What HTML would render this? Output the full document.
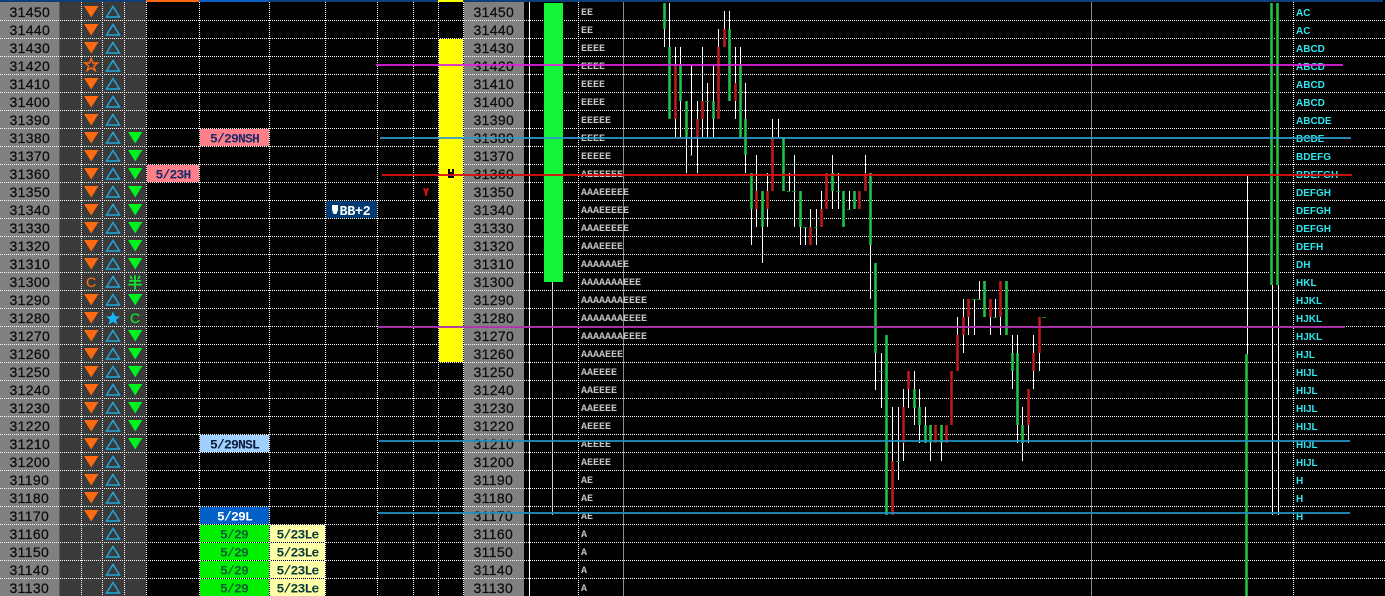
<!DOCTYPE html>
<html><head><meta charset="utf-8"><title>Chart</title>
<style>
html,body{margin:0;padding:0;background:#000;width:1385px;height:596px;overflow:hidden}
svg{display:block}
.p{font:14px "Liberation Sans",sans-serif;fill:#0c0c0c;stroke:#0c0c0c;stroke-width:.25px;letter-spacing:.35px}
.t{font:bold 10px "Liberation Mono",monospace;fill:#c4c4c4}
.c{font:bold 10px "Liberation Sans",sans-serif;fill:#2fe6ee}
.l{font:bold 13px "Liberation Mono",monospace;text-anchor:middle;letter-spacing:-.8px}
</style></head><body>
<svg width="1385" height="596" viewBox="0 0 1385 596" xmlns="http://www.w3.org/2000/svg">
<defs>
<polygon id="o" points="84,6 98.5,6 91.2,17.5" fill="#ff6a10"/>
<polygon id="b" points="113,6.5 119.5,17 106.5,17" fill="none" stroke="#20a8dc" stroke-width="1.5"/>
<polygon id="g" points="128,6 142.3,6 135.2,17.5" fill="#00f020"/>
</defs>
<rect width="1385" height="596" fill="#000"/>
<rect x="0" y="2" width="59" height="594" fill="#808080"/>
<rect x="59" y="2" width="1" height="594" fill="#5a5a5a"/>
<rect x="60" y="2" width="86" height="594" fill="#3a3a3a"/>
<rect x="464" y="2" width="60" height="594" fill="#808080"/>
<rect x="0" y="0" width="1383" height="2" fill="#0f3f75"/>
<rect x="146" y="0" width="53" height="2" fill="#ff6a10"/>
<rect x="199" y="0" width="70" height="2" fill="#0a60c0"/>
<rect x="438" y="0" width="25" height="2" fill="#ffff00"/>
<path d="M529.5 2V596" stroke="#fff" stroke-width="1"/>
<path d="M623.5 2V596M1091.5 2V596" stroke="#8a8a8a" stroke-width="1"/>
<path d="M0 20.5H1385M0 38.5H1385M0 56.5H1385M0 74.5H1385M0 92.5H1385M0 110.5H1385M0 128.5H1385M0 146.5H1385M0 164.5H1385M0 182.5H1385M0 200.5H1385M0 218.5H1385M0 236.5H1385M0 254.5H1385M0 272.5H1385M0 290.5H1385M0 308.5H1385M0 326.5H1385M0 344.5H1385M0 362.5H1385M0 380.5H1385M0 398.5H1385M0 416.5H1385M0 434.5H1385M0 452.5H1385M0 470.5H1385M0 488.5H1385M0 506.5H1385M0 524.5H1385M0 542.5H1385M0 560.5H1385M0 578.5H1385" stroke="#fff" stroke-width="1" stroke-dasharray="1 1" fill="none"/>
<path d="M81.5 2V596M102.5 2V596M124.5 2V596M146.5 2V596M199.5 2V596M269.5 2V596M325.5 2V596M377.5 2V596M413.5 2V596M438.5 2V596M463.5 2V596M578.5 2V596M1293.5 2V596" stroke="#fff" stroke-width="1" stroke-dasharray="1 1" fill="none"/>
<rect x="439" y="39" width="24" height="323" fill="#ffff00"/>
<rect x="544" y="3" width="19" height="279" fill="#14f53a"/>
<path d="M552.5 282V515" stroke="#d0d0d0" stroke-width="1"/>
<g>
<text class="p" x="9.5" y="17">31450</text><text class="p" x="9.5" y="35">31440</text><text class="p" x="9.5" y="53">31430</text><text class="p" x="9.5" y="71">31420</text><text class="p" x="9.5" y="89">31410</text><text class="p" x="9.5" y="107">31400</text><text class="p" x="9.5" y="125">31390</text><text class="p" x="9.5" y="143">31380</text><text class="p" x="9.5" y="161">31370</text><text class="p" x="9.5" y="179">31360</text><text class="p" x="9.5" y="197">31350</text><text class="p" x="9.5" y="215">31340</text><text class="p" x="9.5" y="233">31330</text><text class="p" x="9.5" y="251">31320</text><text class="p" x="9.5" y="269">31310</text><text class="p" x="9.5" y="287">31300</text><text class="p" x="9.5" y="305">31290</text><text class="p" x="9.5" y="323">31280</text><text class="p" x="9.5" y="341">31270</text><text class="p" x="9.5" y="359">31260</text><text class="p" x="9.5" y="377">31250</text><text class="p" x="9.5" y="395">31240</text><text class="p" x="9.5" y="413">31230</text><text class="p" x="9.5" y="431">31220</text><text class="p" x="9.5" y="449">31210</text><text class="p" x="9.5" y="467">31200</text><text class="p" x="9.5" y="485">31190</text><text class="p" x="9.5" y="503">31180</text><text class="p" x="9.5" y="521">31170</text><text class="p" x="9.5" y="539">31160</text><text class="p" x="9.5" y="557">31150</text><text class="p" x="9.5" y="575">31140</text><text class="p" x="9.5" y="593">31130</text>
<text class="p" x="473.5" y="17">31450</text><text class="p" x="473.5" y="35">31440</text><text class="p" x="473.5" y="53">31430</text><text class="p" x="473.5" y="71">31420</text><text class="p" x="473.5" y="89">31410</text><text class="p" x="473.5" y="107">31400</text><text class="p" x="473.5" y="125">31390</text><text class="p" x="473.5" y="143">31380</text><text class="p" x="473.5" y="161">31370</text><text class="p" x="473.5" y="179">31360</text><text class="p" x="473.5" y="197">31350</text><text class="p" x="473.5" y="215">31340</text><text class="p" x="473.5" y="233">31330</text><text class="p" x="473.5" y="251">31320</text><text class="p" x="473.5" y="269">31310</text><text class="p" x="473.5" y="287">31300</text><text class="p" x="473.5" y="305">31290</text><text class="p" x="473.5" y="323">31280</text><text class="p" x="473.5" y="341">31270</text><text class="p" x="473.5" y="359">31260</text><text class="p" x="473.5" y="377">31250</text><text class="p" x="473.5" y="395">31240</text><text class="p" x="473.5" y="413">31230</text><text class="p" x="473.5" y="431">31220</text><text class="p" x="473.5" y="449">31210</text><text class="p" x="473.5" y="467">31200</text><text class="p" x="473.5" y="485">31190</text><text class="p" x="473.5" y="503">31180</text><text class="p" x="473.5" y="521">31170</text><text class="p" x="473.5" y="539">31160</text><text class="p" x="473.5" y="557">31150</text><text class="p" x="473.5" y="575">31140</text><text class="p" x="473.5" y="593">31130</text>
</g>
<g>
<use href="#o" y="0"/><use href="#o" y="18"/><use href="#o" y="36"/><use href="#o" y="72"/><use href="#o" y="90"/><use href="#o" y="108"/><use href="#o" y="126"/><use href="#o" y="144"/><use href="#o" y="162"/><use href="#o" y="180"/><use href="#o" y="198"/><use href="#o" y="216"/><use href="#o" y="234"/><use href="#o" y="252"/><use href="#o" y="288"/><use href="#o" y="306"/><use href="#o" y="324"/><use href="#o" y="342"/><use href="#o" y="360"/><use href="#o" y="378"/><use href="#o" y="396"/><use href="#o" y="414"/><use href="#o" y="432"/><use href="#o" y="450"/><use href="#o" y="468"/><use href="#o" y="486"/><use href="#o" y="504"/>
<use href="#b" y="0"/><use href="#b" y="18"/><use href="#b" y="36"/><use href="#b" y="54"/><use href="#b" y="72"/><use href="#b" y="90"/><use href="#b" y="108"/><use href="#b" y="126"/><use href="#b" y="144"/><use href="#b" y="162"/><use href="#b" y="180"/><use href="#b" y="198"/><use href="#b" y="216"/><use href="#b" y="234"/><use href="#b" y="252"/><use href="#b" y="270"/><use href="#b" y="288"/><use href="#b" y="324"/><use href="#b" y="342"/><use href="#b" y="360"/><use href="#b" y="378"/><use href="#b" y="396"/><use href="#b" y="414"/><use href="#b" y="432"/><use href="#b" y="450"/><use href="#b" y="468"/><use href="#b" y="486"/><use href="#b" y="504"/><use href="#b" y="522"/><use href="#b" y="540"/><use href="#b" y="558"/><use href="#b" y="576"/>
<use href="#g" y="126"/><use href="#g" y="144"/><use href="#g" y="162"/><use href="#g" y="180"/><use href="#g" y="198"/><use href="#g" y="216"/><use href="#g" y="234"/><use href="#g" y="252"/><use href="#g" y="288"/><use href="#g" y="324"/><use href="#g" y="342"/><use href="#g" y="360"/><use href="#g" y="378"/><use href="#g" y="396"/><use href="#g" y="414"/><use href="#g" y="432"/>
<polygon points="91.2,58.5 92.9,63 97.6,63 93.8,66 95.2,70.6 91.2,67.8 87.2,70.6 88.6,66 84.8,63 89.5,63" fill="none" stroke="#ff6a10" stroke-width="1.4"/>
<polygon points="113,311.5 115,316.3 120.2,316.5 116.1,319.7 117.6,324.8 113,321.9 108.4,324.8 109.9,319.7 105.8,316.5 111,316.3" fill="#18b4f0"/>
<text x="91" y="287" text-anchor="middle" style="font:14px 'Liberation Sans',sans-serif;fill:#f06a18;stroke:#f06a18;stroke-width:.3px">C</text>
<text x="135" y="323" text-anchor="middle" style="font:14px 'Liberation Sans',sans-serif;fill:#10e030;stroke:#10e030;stroke-width:.3px">C</text>
<text x="135" y="288" text-anchor="middle" style="font:bold 15px 'Liberation Sans','Noto Sans CJK JP',sans-serif;fill:#10e030">半</text>
</g>
<g>
<rect x="200" y="129" width="69" height="17" fill="#ff8088"/><text class="l" x="234.5" y="142.5" fill="#1a2a6a">5/29NSH</text>
<rect x="147" y="165" width="52" height="17" fill="#ff8088"/><text class="l" x="173" y="178.5" fill="#1a2a6a">5/23H</text>
<rect x="200" y="435" width="69" height="17" fill="#a0d0ff"/><text class="l" x="234.5" y="448.5" fill="#0a1a3a">5/29NSL</text>
<rect x="200" y="507" width="69" height="17" fill="#0060c8"/><text class="l" x="234.5" y="520.5" fill="#fff">5/29L</text>
<rect x="200" y="525" width="69" height="17" fill="#00f000"/><text class="l" x="234" y="538.5" fill="#0b5e38">5/29</text>
<rect x="200" y="543" width="69" height="17" fill="#00f000"/><text class="l" x="234" y="556.5" fill="#0b5e38">5/29</text>
<rect x="200" y="561" width="69" height="17" fill="#00f000"/><text class="l" x="234" y="574.5" fill="#0b5e38">5/29</text>
<rect x="200" y="579" width="69" height="17" fill="#00f000"/><text class="l" x="234" y="592.5" fill="#0b5e38">5/29</text>
<rect x="270" y="525" width="55" height="17" fill="#ffffa8"/><text class="l" x="297.5" y="538.5" fill="#0a3a3a">5/23Le</text>
<rect x="270" y="543" width="55" height="17" fill="#ffffa8"/><text class="l" x="297.5" y="556.5" fill="#0a3a3a">5/23Le</text>
<rect x="270" y="561" width="55" height="17" fill="#ffffa8"/><text class="l" x="297.5" y="574.5" fill="#0a3a3a">5/23Le</text>
<rect x="270" y="579" width="55" height="17" fill="#ffffa8"/><text class="l" x="297.5" y="592.5" fill="#0a3a3a">5/23Le</text>
<rect x="326" y="201" width="51" height="17" fill="#003a70"/>
<polygon points="332,205 338,205 338,210 336.5,214 333.5,214 332,210" fill="#fff"/>
<text x="339.5" y="215" style="font:bold 13.5px 'Liberation Mono',monospace;fill:#fff;letter-spacing:-.4px">BB+2</text>
<polygon points="423,188 425,188 426,190 427,188 429,188 427.5,192 427,196 425,196 424.5,192" fill="#d01010"/>
<path d="M448 178V169H450V172H452V169H454V178Z" fill="#000"/>
</g>
<g>
<text class="t" x="581" y="15">EE</text><text class="t" x="581" y="33">EE</text><text class="t" x="581" y="51">EEEE</text><text class="t" x="581" y="69">EEEE</text><text class="t" x="581" y="87">EEEE</text><text class="t" x="581" y="105">EEEE</text><text class="t" x="581" y="123">EEEEE</text><text class="t" x="581" y="141">EEEE</text><text class="t" x="581" y="159">EEEEE</text><text class="t" x="581" y="177">AEEEEEE</text><text class="t" x="581" y="195">AAAEEEEE</text><text class="t" x="581" y="213">AAAEEEEE</text><text class="t" x="581" y="231">AAAEEEEE</text><text class="t" x="581" y="249">AAAEEEE</text><text class="t" x="581" y="267">AAAAAAEE</text><text class="t" x="581" y="285">AAAAAAAEEE</text><text class="t" x="581" y="303">AAAAAAAEEEE</text><text class="t" x="581" y="321">AAAAAAAEEEE</text><text class="t" x="581" y="339">AAAAAAAEEEE</text><text class="t" x="581" y="357">AAAAEEE</text><text class="t" x="581" y="375">AAEEEE</text><text class="t" x="581" y="393">AAEEEE</text><text class="t" x="581" y="411">AAEEEE</text><text class="t" x="581" y="429">AEEEE</text><text class="t" x="581" y="447">AEEEE</text><text class="t" x="581" y="465">AEEEE</text><text class="t" x="581" y="483">AE</text><text class="t" x="581" y="501">AE</text><text class="t" x="581" y="519">AE</text><text class="t" x="581" y="537">A</text><text class="t" x="581" y="555">A</text><text class="t" x="581" y="573">A</text><text class="t" x="581" y="591">A</text>
<text class="c" x="1296" y="16">AC</text><text class="c" x="1296" y="34">AC</text><text class="c" x="1296" y="52">ABCD</text><text class="c" x="1296" y="70">ABCD</text><text class="c" x="1296" y="88">ABCD</text><text class="c" x="1296" y="106">ABCD</text><text class="c" x="1296" y="124">ABCDE</text><text class="c" x="1296" y="142">BCDE</text><text class="c" x="1296" y="160">BDEFG</text><text class="c" x="1296" y="178">BDEFGH</text><text class="c" x="1296" y="196">DEFGH</text><text class="c" x="1296" y="214">DEFGH</text><text class="c" x="1296" y="232">DEFGH</text><text class="c" x="1296" y="250">DEFH</text><text class="c" x="1296" y="268">DH</text><text class="c" x="1296" y="286">HKL</text><text class="c" x="1296" y="304">HJKL</text><text class="c" x="1296" y="322">HJKL</text><text class="c" x="1296" y="340">HJKL</text><text class="c" x="1296" y="358">HJL</text><text class="c" x="1296" y="376">HIJL</text><text class="c" x="1296" y="394">HIJL</text><text class="c" x="1296" y="412">HIJL</text><text class="c" x="1296" y="430">HIJL</text><text class="c" x="1296" y="448">HIJL</text><text class="c" x="1296" y="466">HIJL</text><text class="c" x="1296" y="484">H</text><text class="c" x="1296" y="502">H</text><text class="c" x="1296" y="520">H</text>
</g>
<path fill="none" stroke="#fff" stroke-width="1" d="M664.5 3V47M669.5 3V47M675.5 47V137M680.5 47V137M686.5 101V173M691.5 65V155M697.5 101V173M702.5 47V137M707.5 83V137M713.5 65V137M718.5 29V47M724.5 11V47M729.5 11V29M735.5 47V119M740.5 47V65M745.5 83V173M751.5 209V245M756.5 155V227M762.5 227V263M767.5 173V227M772.5 119V137M778.5 119V137M789.5 173V191M794.5 155V227M800.5 227V245M805.5 227V245M810.5 209V245M816.5 209V245M821.5 191V227M832.5 155V209M838.5 173V209M849.5 191V209M865.5 155V173M870.5 245V299M875.5 353V390M881.5 353V408M892.5 407V461M898.5 407V480M903.5 389V461M908.5 389V408M914.5 371V425M919.5 389V443M925.5 407V425M930.5 443V461M941.5 443V461M957.5 317V335M963.5 299V353M968.5 317V335M974.5 299V335M979.5 281V299M990.5 317V335M995.5 299V317M1000.5 317V335M1012.5 335V389M1017.5 335V353M1017.5 425V443M1022.5 407V461M1028.5 425V443M1033.5 335V389M1039.5 353V371M1247.5 176V354M1272.5 285V515M1278.5 285V515"/>
<path fill="none" stroke="#126c28" stroke-width="3" d="M664.5 3V29M669.5 47V119M680.5 65V101M686.5 101V137M713.5 101V119M729.5 29V101M740.5 65V137M745.5 119V155M751.5 173V209M762.5 191V227M783.5 137V191M800.5 191V227M832.5 173V191M843.5 191V227M854.5 191V209M870.5 173V245M875.5 263V353M886.5 335V515M914.5 389V408M919.5 407V425M925.5 425V443M930.5 425V443M941.5 425V443M984.5 281V317M1006.5 281V335M1012.5 353V371M1017.5 353V425M1022.5 425V443M1271.5 3V285M1277.5 3V285M1246.5 354V596"/>
<path fill="none" stroke="#22c448" stroke-width="2" d="M664.5 3V29M669.5 47V119M680.5 65V101M686.5 101V137M713.5 101V119M729.5 29V101M740.5 65V137M745.5 119V155M751.5 173V209M762.5 191V227M783.5 137V191M800.5 191V227M832.5 173V191M843.5 191V227M854.5 191V209M870.5 173V245M875.5 263V353M886.5 335V515M914.5 389V408M919.5 407V425M925.5 425V443M930.5 425V443M941.5 425V443M984.5 281V317M1006.5 281V335M1012.5 353V371M1017.5 353V425M1022.5 425V443M1271.5 3V285M1277.5 3V285M1246.5 354V596"/>
<path fill="none" stroke="#6a1010" stroke-width="3" d="M675.5 65V119M697.5 119V137M702.5 101V119M718.5 47V119M724.5 29V47M735.5 83V101M756.5 191V209M767.5 191V209M772.5 137V191M810.5 227V245M821.5 209V227M826.5 173V209M859.5 191V209M865.5 173V191M892.5 461V515M903.5 407V443M908.5 371V389M935.5 425V443M946.5 425V443M951.5 371V425M957.5 335V371M963.5 317V335M968.5 299V317M990.5 299V317M1000.5 281V317M1028.5 389V425M1033.5 353V371M1039.5 317V353"/>
<path fill="none" stroke="#bc1a1a" stroke-width="2" d="M675.5 65V119M697.5 119V137M702.5 101V119M718.5 47V119M724.5 29V47M735.5 83V101M756.5 191V209M767.5 191V209M772.5 137V191M810.5 227V245M821.5 209V227M826.5 173V209M859.5 191V209M865.5 173V191M892.5 461V515M903.5 407V443M908.5 371V389M935.5 425V443M946.5 425V443M951.5 371V425M957.5 335V371M963.5 317V335M968.5 299V317M990.5 299V317M1000.5 281V317M1028.5 389V425M1033.5 353V371M1039.5 317V353"/>
<path fill="none" stroke="#1a8a30" stroke-width="1" d="M690 155.5H692M705 101.5H709M787 191.5H790M792 191.5H796M803 227.5H807M814 227.5H818M836 191.5H840M847 209.5H851M879 371.5H883M896 461.5H900M972 299.5H976M977 299.5H981M993 317.5H997M1042 317.5H1046"/>
<g fill="none" stroke-width="2">
<path d="M376 65H1343" stroke="#e020e0" opacity=".88"/>
<path d="M380 138H1351" stroke="#2f98c8" opacity=".88"/>
<path d="M382 175H1352" stroke="#d81010" opacity=".94"/>
<path d="M378 327H1345" stroke="#b030b0" opacity=".92"/>
<path d="M379 441H1350" stroke="#1f8fc0" opacity=".9"/>
<path d="M378 513H1350" stroke="#1f8fc0" opacity=".9"/>
</g>
</svg>
</body></html>
